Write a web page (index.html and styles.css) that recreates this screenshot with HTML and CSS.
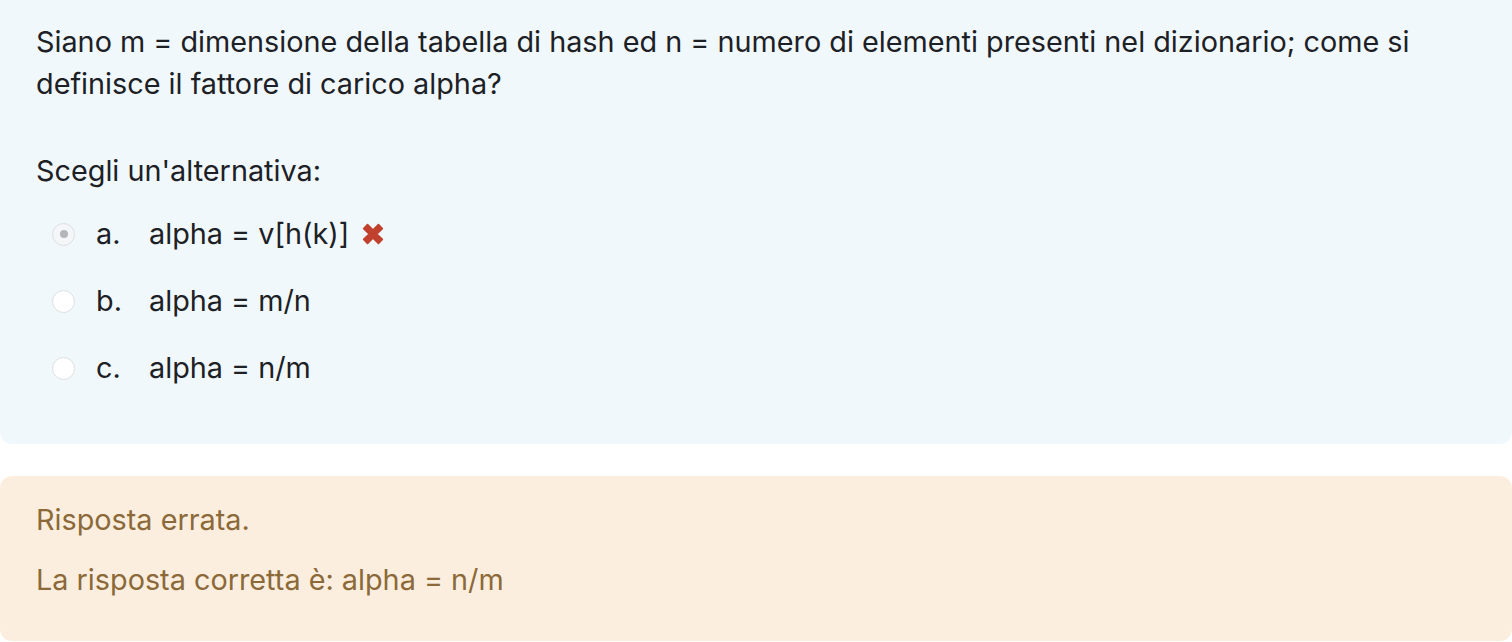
FILE: index.html
```html
<!DOCTYPE html>
<html lang="it">
<head>
<meta charset="utf-8">
<title>Domanda</title>
<link rel="stylesheet" href="styles.css">
</head>
<body>
<div class="que">
  <div class="formulation">
    <p class="qtext">Siano m = dimensione della tabella di hash ed n = numero di elementi presenti nel dizionario; come si definisce il fattore di carico alpha?</p>
    <p class="prompt">Scegli un'alternativa:</p>
    <div class="answers">
      <div class="option">
        <span class="radio checked"><span class="dot"></span></span>
        <span class="letter">a.</span>
        <span class="atext">alpha = v[h(k)]</span>
        <svg class="wrong" viewBox="0 0 22 22" width="24" height="24" aria-label="Errato">
          <path d="M2.5 6 L6 2.5 L11 7.5 L16 2.5 L19.5 6 L14.5 11 L19.5 16 L16 19.5 L11 14.5 L6 19.5 L2.5 16 L7.5 11 Z" fill="#c0412e" stroke="#c0412e" stroke-width="1.6" stroke-linejoin="round"/>
        </svg>
      </div>
      <div class="option">
        <span class="radio"></span>
        <span class="letter">b.</span>
        <span class="atext">alpha = m/n</span>
      </div>
      <div class="option">
        <span class="radio"></span>
        <span class="letter">c.</span>
        <span class="atext">alpha = n/m</span>
      </div>
    </div>
  </div>
  <div class="outcome">
    <p class="feedback">Risposta errata.</p>
    <p class="feedback">La risposta corretta è: alpha = n/m</p>
  </div>
</div>
</body>
</html>
```
FILE: styles.css
```css
html, body {
  margin: 0;
  padding: 0;
  background: #ffffff;
}
body {
  font-family: Inter, "Noto Sans", "Liberation Sans", sans-serif;
  font-size: 28.8px;
  line-height: 42px;
  color: #1d2125;
}
p { margin: 0; }
.que {
  display: flex;
  flex-direction: column;
  gap: 32px;
}
.formulation {
  background: #f0f8fc;
  border-radius: 0 0 12px 12px;
  padding: 21px 36px 55px 36px;
}
.qtext { margin-bottom: 45px; }
.prompt { margin-bottom: 21px; }
.answers {
  display: flex;
  flex-direction: column;
  gap: 25px;
}
.option {
  display: flex;
  align-items: center;
  height: 42px;
  padding-left: 16px;
}
.radio {
  width: 23px;
  height: 23px;
  box-sizing: border-box;
  border-radius: 50%;
  border: 1px solid #dcdfe2;
  background: #ffffff;
  display: flex;
  align-items: center;
  justify-content: center;
  margin-right: 21px;
}
.radio.checked { background: #f5f6f7; }
.dot {
  width: 8px;
  height: 8px;
  border-radius: 50%;
  background: #b3b6b9;
}
.letter { width: 53px; }
.wrong { margin-left: 12px; }
.outcome {
  background: #fbeedf;
  border-radius: 12px;
  color: #8b6938;
  padding: 23px 36px 40px 36px;
  display: flex;
  flex-direction: column;
  gap: 18px;
}
```
